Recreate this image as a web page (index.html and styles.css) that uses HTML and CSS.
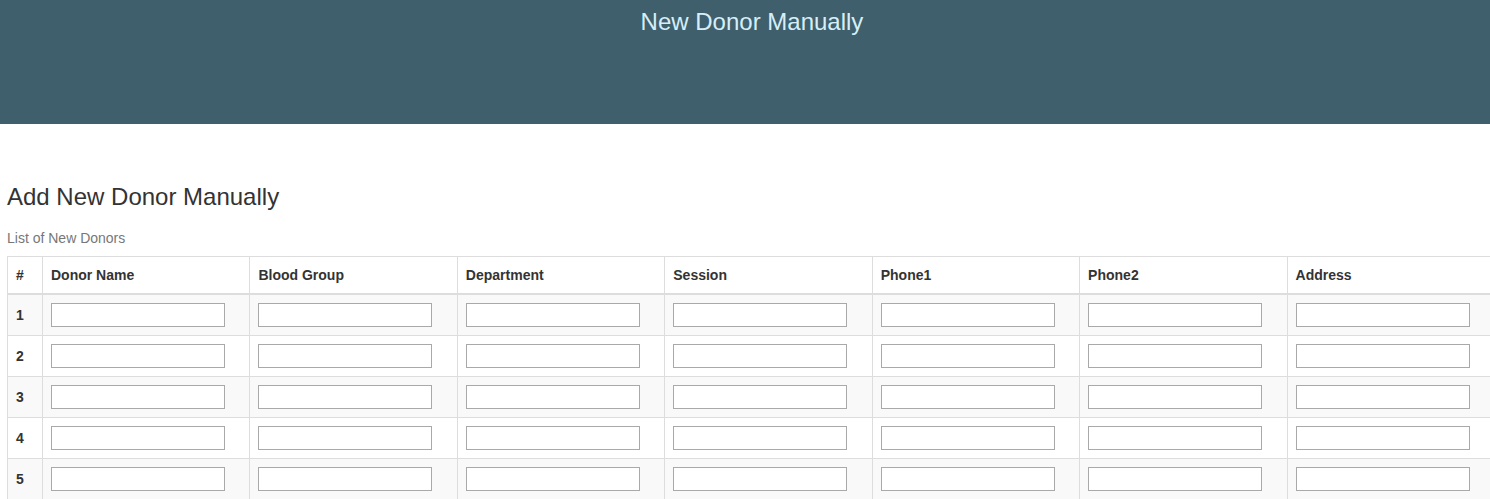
FILE: index.html
```html
<!DOCTYPE html>
<html>
<head>
<meta charset="utf-8">
<link rel="stylesheet" href="styles.css">
</head>
<body>
<header class="topbar">
  <h1 class="topbar-title">New Donor Manually</h1>
</header>
<main class="content">
  <h3 class="page-title">Add New Donor Manually</h3>
  <table class="donor-table">
    <caption>List of New Donors</caption>
    <thead>
      <tr>
        <th class="col-num">#</th>
        <th>Donor Name</th>
        <th>Blood Group</th>
        <th>Department</th>
        <th>Session</th>
        <th>Phone1</th>
        <th>Phone2</th>
        <th>Address</th>
      </tr>
    </thead>
    <tbody>
      <tr><th class="col-num">1</th><td><input type="text"></td><td><input type="text"></td><td><input type="text"></td><td><input type="text"></td><td><input type="text"></td><td><input type="text"></td><td><input type="text"></td></tr>
      <tr><th class="col-num">2</th><td><input type="text"></td><td><input type="text"></td><td><input type="text"></td><td><input type="text"></td><td><input type="text"></td><td><input type="text"></td><td><input type="text"></td></tr>
      <tr><th class="col-num">3</th><td><input type="text"></td><td><input type="text"></td><td><input type="text"></td><td><input type="text"></td><td><input type="text"></td><td><input type="text"></td><td><input type="text"></td></tr>
      <tr><th class="col-num">4</th><td><input type="text"></td><td><input type="text"></td><td><input type="text"></td><td><input type="text"></td><td><input type="text"></td><td><input type="text"></td><td><input type="text"></td></tr>
      <tr><th class="col-num">5</th><td><input type="text"></td><td><input type="text"></td><td><input type="text"></td><td><input type="text"></td><td><input type="text"></td><td><input type="text"></td><td><input type="text"></td></tr>
    </tbody>
  </table>
</main>
</body>
</html>
```
FILE: styles.css
```css
html, body {
  margin: 0;
  padding: 0;
}
body {
  font-family: "Liberation Sans", Arial, sans-serif;
  font-size: 14px;
  line-height: 1.42857;
  color: #333;
  background: #fff;
  overflow: hidden;
}
.topbar {
  background: #3e5f6b;
  height: 124px;
  box-sizing: border-box;
  padding-top: 7px;
  padding-left: 14px;
  text-align: center;
}
.topbar-title {
  margin: 0;
  font-size: 24px;
  font-weight: 400;
  line-height: 30px;
  color: #d6eef8;
}
.content {
  padding: 0 7px;
}
.page-title {
  margin: 60px 0 0;
  font-size: 24px;
  font-weight: 500;
  line-height: 1.1;
  color: #333;
}
.donor-table {
  border-collapse: collapse;
  border-spacing: 0;
  margin-top: 10px;
  border: 1px solid #ddd;
  width: 1488px;
  table-layout: fixed;
}
.donor-table caption {
  text-align: left;
  color: #777;
  padding: 8px 0;
  font-size: 14px;
  line-height: 20px;
}
.donor-table th,
.donor-table td {
  border: 1px solid #ddd;
  padding: 8px;
  text-align: left;
  vertical-align: top;
  line-height: 20px;
}
.donor-table th.col-num {
  width: 18px;
}
.donor-table thead th {
  border-bottom: 2px solid #ddd;
  vertical-align: bottom;
  font-weight: bold;
}
.donor-table tbody th {
  font-weight: bold;
  vertical-align: middle;
}
.donor-table tbody tr:nth-child(odd) {
  background: #f9f9f9;
}
.donor-table input {
  display: block;
  box-sizing: border-box;
  width: 174px;
  height: 24px;
  margin: 0;
  padding: 1px 2px;
  border: 1px solid #a9a9a9;
  background: #fff;
  font: 13px "Liberation Sans", Arial, sans-serif;
}
```
